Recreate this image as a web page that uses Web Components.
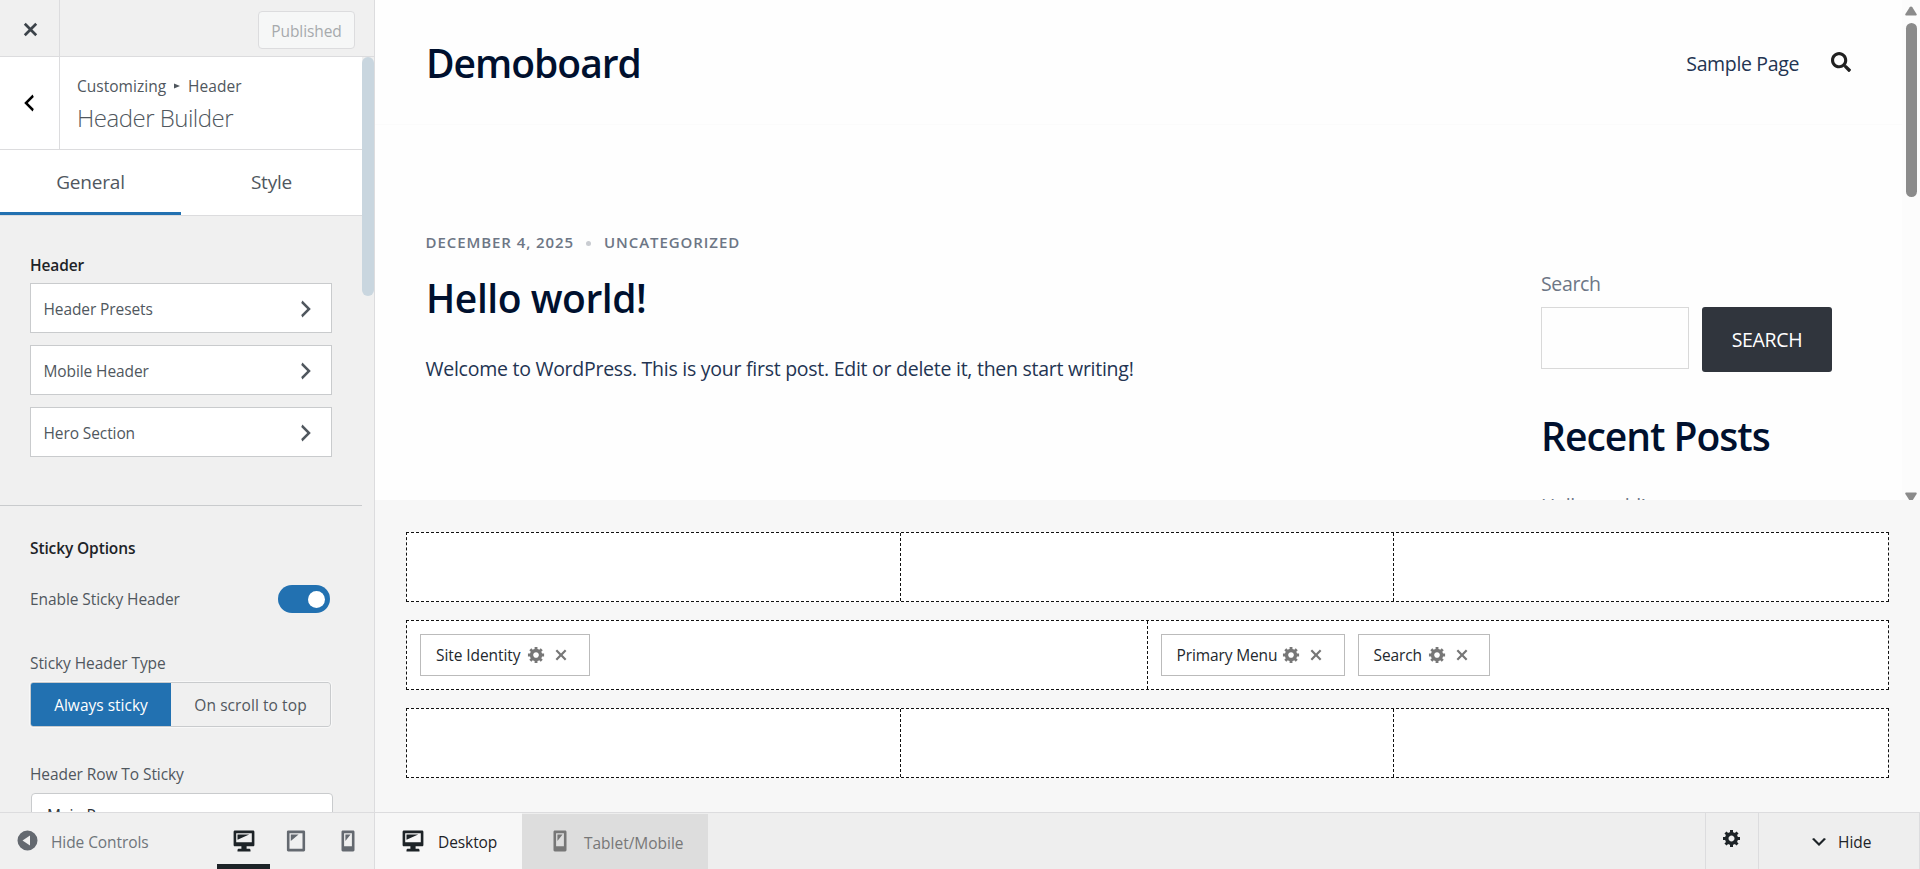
<!DOCTYPE html>
<html lang="en">
<head>
<meta charset="utf-8">
<title>Customize: Demoboard</title>
<style>
    html, body {
        margin: 0;
        height: 100%;
        overflow: hidden;
    }

    body {
        font-family: "Open Sans", "Noto Sans", sans-serif;
        font-size: 15.5px;
        letter-spacing: -0.08px;
        color: #50575e;
    }
</style>
</head>
<body>
<customizer-app></customizer-app>

<script>
    const ICONS = {
        no: ['0 0 20 20', 'M14.95 6.46L11.41 10l3.54 3.54-1.41 1.41L10 11.42l-3.53 3.53-1.42-1.42L8.58 10 5.05 6.47l1.42-1.42L10 8.58l3.54-3.53z'],
        left: ['0 0 20 20', 'M14 5l-5 5 5 5-1 2-7-7 7-7z'],
        right: ['0 0 20 20', 'M6 15l5-5-5-5 1-2 7 7-7 7z'],
        down: ['0 0 20 20', 'M5 6l5 5 5-5 2 1-7 7-7-7z'],
        gear: ['0 0 20 20', 'M18 12h-2.18c-.17.7-.44 1.35-.81 1.93l1.54 1.54-2.1 2.1-1.54-1.54c-.58.36-1.23.63-1.91.79V19H8v-2.18c-.68-.16-1.33-.43-1.91-.79l-1.54 1.54-2.12-2.12 1.54-1.54c-.36-.58-.63-1.23-.79-1.91H1V9.03h2.17c.16-.7.44-1.35.8-1.94L2.43 5.55l2.1-2.1 1.54 1.54c.58-.37 1.24-.64 1.93-.81V2h3v2.18c.68.16 1.33.43 1.91.79l1.54-1.54 2.12 2.12-1.54 1.54c.36.59.64 1.24.8 1.94H18V12zm-8.5 1.5c1.66 0 3-1.34 3-3s-1.34-3-3-3-3 1.34-3 3 1.34 3 3 3z'],
        desktop: ['0 0 20 20', 'M3 2h14c.55 0 1 .45 1 1v10c0 .55-.45 1-1 1h-5v2h2c.55 0 1 .45 1 1v1H5v-1c0-.55.45-1 1-1h2v-2H3c-.55 0-1-.45-1-1V3c0-.55.45-1 1-1zm13 9V4H4v7h12zM5 5h9L5 9V5z'],
        tablet: ['0 0 20 20', 'M4 2h12c.55 0 1 .45 1 1v14c0 .55-.45 1-1 1H4c-.55 0-1-.45-1-1V3c0-.55.45-1 1-1zm11 14V4H5v12h10zM6 5h6l-6 5V5z'],
        phone: ['0 0 20 20', 'M6 2h8c.55 0 1 .45 1 1v14c0 .55-.45 1-1 1H6c-.55 0-1-.45-1-1V3c0-.55.45-1 1-1zm7 12V4H7v10h6zM8 5h4l-4 5V5z'],
        collapse: ['0 0 20 20', 'M10 2a8 8 0 1 0 0 16 8 8 0 1 0 0-16zM12 6v8l-6-4z'],
        crumb: ['0 0 6 6', 'M0 0.5L6 3L0 5.5z'],
        search: ['0 0 512 512', 'M505 442.7L405.3 343c-4.5-4.5-10.6-7-17-7H372c27.6-35.3 44-79.7 44-128C416 93.1 322.9 0 208 0S0 93.1 0 208s93.1 208 208 208c48.3 0 92.7-16.4 128-44v16.3c0 6.4 2.5 12.5 7 17l99.7 99.7c9.4 9.4 24.6 9.4 33.9 0l28.3-28.3c9.4-9.4 9.4-24.6.1-34zM208 336c-70.7 0-128-57.2-128-128 0-70.7 57.2-128 128-128 70.7 0 128 57.2 128 128 0 70.7-57.2 128-128 128z'],
        up: ['0 0 12 10', 'M6 0.5Q6.8 0.5 7.3 1.2L11.6 8Q12.2 9.6 10.8 9.6H1.2Q-0.2 9.6 0.4 8L4.7 1.2Q5.2 0.5 6 0.5z'],
        tri: ['0 0 12 10', 'M6 9.5Q6.8 9.5 7.3 8.8L11.6 2Q12.2 0.4 10.8 0.4H1.2Q-0.2 0.4 0.4 2L4.7 8.8Q5.2 9.5 6 9.5z']
    };

    // Shared base: opens the shadow root and fills it from markup()
    class BaseElement extends HTMLElement {
        constructor() {
            super();
            this.attachShadow({ mode: 'open' });
        }

        connectedCallback() {
            const template = document.createElement('template');
            template.innerHTML = this.markup();
            this.shadowRoot.replaceChildren(template.content.cloneNode(true));
        }
    }

    class UiIcon extends BaseElement {
        markup() {
            const [box, path] = ICONS[this.getAttribute('name')];
            return `
                <style>
                    :host { display: block; flex: none; width: 26px; height: 26px; }
                    svg { display: block; width: 100%; height: 100%; fill: currentColor; }
                </style>
                <svg viewBox="${box}"><path fill-rule="evenodd" d="${path}"/></svg>
            `;
        }
    }

    class PanelLink extends BaseElement {
        markup() {
            return `
                <style>
                    :host {
                        display: flex;
                        align-items: center;
                        justify-content: space-between;
                        box-sizing: border-box;
                        height: 50px;
                        margin-bottom: 12px;
                        padding: 2px 13px 0 12.5px;
                        background: #fff;
                        border: 1px solid #c9cbcd;
                        letter-spacing: -0.1px;
                    }
                    ui-icon { width: 24px; height: 24px; margin-top: -1px; }
                </style>
                <slot></slot>
                <ui-icon name="right"></ui-icon>
            `;
        }
    }

    class SidebarTop extends BaseElement {
        markup() {
            return `
                <style>
                    :host {
                        display: flex;
                        box-sizing: border-box;
                        height: 57px;
                        border-bottom: 1px solid #dcdcde;
                    }
                    .close {
                        display: flex;
                        justify-content: center;
                        align-items: center;
                        width: 59px;
                        border-right: 1px solid #dcdcde;
                        color: #3c434a;
                    }
                    .close ui-icon { width: 27px; height: 27px; margin: 2px 0 0 2px; }
                    .publish {
                        box-sizing: border-box;
                        width: 97px;
                        height: 38px;
                        margin: 11px 19px 0 auto;
                        border: 1px solid #dcdcde;
                        border-radius: 4px;
                        background: #f6f7f7;
                        color: #a7aaad;
                        font: inherit;
                        letter-spacing: -0.1px;
                        line-height: 36px;
                        padding: 1px 0 0;
                    }
                </style>
                <div class="close"><ui-icon name="no"></ui-icon></div>
                <button class="publish">Published</button>
            `;
        }
    }

    class PanelHeading extends BaseElement {
        markup() {
            return `
                <style>
                    :host {
                        display: flex;
                        box-sizing: border-box;
                        height: 93px;
                        background: #fff;
                        border-bottom: 1px solid #dcdcde;
                    }
                    .back {
                        display: flex;
                        justify-content: center;
                        align-items: center;
                        width: 59px;
                        border-right: 1px solid #dcdcde;
                        color: #000;
                    }
                    .back ui-icon { width: 24px; height: 24px; margin: 0 2px 1px 0; }
                    .text { padding: 17px 0 0 17px; }
                    .crumbs { display: flex; align-items: center; line-height: 24px; letter-spacing: 0.02px; }
                    .crumbs ui-icon { width: 6px; height: 6px; margin: 0 8px; }
                    h2 {
                        margin: 3px 0 0;
                        font-size: 24px;
                        font-weight: 300;
                        line-height: 34px;
                        letter-spacing: -0.5px;
                    }
                </style>
                <div class="back"><ui-icon name="left"></ui-icon></div>
                <div class="text">
                    <div class="crumbs"><span>Customizing</span><ui-icon name="crumb"></ui-icon><span>Header</span></div>
                    <h2>Header Builder</h2>
                </div>
            `;
        }
    }

    class PanelTabs extends BaseElement {
        markup() {
            return `
                <style>
                    :host {
                        display: grid;
                        grid-template-columns: 1fr 1fr;
                        box-sizing: border-box;
                        height: 66px;
                        background: #fff;
                        border-bottom: 1px solid #dcdcde;
                        font-size: 19px;
                        letter-spacing: -0.2px;
                        line-height: 64px;
                        text-align: center;
                    }
                    .active { box-shadow: inset 0 -3px #2271b1; }
                </style>
                <div class="active">General</div>
                <div>Style</div>
            `;
        }
    }

    class CustomizerSidebar extends BaseElement {
        markup() {
            return `
                <style>
                    :host {
                        display: flex;
                        flex-direction: column;
                        min-height: 0;
                        background: #f0f0f0;
                        border-right: 1px solid #dcdcde;
                    }
                    .scroll { display: flex; flex: 1; min-height: 0; overflow: hidden; }
                    .panel { width: 362px; }
                    .thumb { width: 12px; height: 239px; border-radius: 6px; background: #c9d6df; }
                    section { padding: 0 30px; }
                    section + section { border-top: 1px solid #c9cbcd; }
                    h3 {
                        margin: 0;
                        color: #1d2327;
                        font-size: 15.5px;
                        font-weight: 600;
                        line-height: 24px;
                        letter-spacing: -0.12px;
                    }
                    .first { height: 289px; box-sizing: border-box; padding-top: 37px; }
                    .first h3 { margin-bottom: 6px; }
                    .second { padding-top: 30px; line-height: 24px; }
                    .toggle-row {
                        display: flex;
                        align-items: center;
                        justify-content: space-between;
                        margin: 25px 2px 0 0;
                        height: 28px;
                    }
                    .toggle {
                        display: flex;
                        align-items: center;
                        justify-content: flex-end;
                        box-sizing: border-box;
                        width: 52px;
                        height: 28px;
                        padding: 0 5px;
                        border-radius: 14px;
                        background: #2271b1;
                    }
                    .toggle i { width: 17px; height: 17px; border-radius: 50%; background: #fff; }
                    .label { margin-top: 38px; }
                    .segment {
                        display: grid;
                        grid-template-columns: 140px 1fr;
                        box-sizing: border-box;
                        width: 301px;
                        height: 45px;
                        margin-top: 7px;
                        border: 1px solid #c9cbcd;
                        border-radius: 3px;
                        outline: 1px solid #f8f8f8;
                        line-height: 45px;
                        text-align: center;
                        overflow: hidden;
                    }
                    .segment b { background: #2271b1; color: #fff; font-weight: 400; letter-spacing: 0; }
                    .segment span { letter-spacing: 0.08px; }
                    .row-label { margin-top: 35px; }
                    .select {
                        box-sizing: border-box;
                        width: 302px;
                        height: 50px;
                        margin: 7px 0 0 1px;
                        padding-left: 15px;
                        border: 1px solid #c9cbcd;
                        border-radius: 4px;
                        background: #fff;
                        color: #2c3338;
                        line-height: 43px;
                    }
                </style>
                <sidebar-top></sidebar-top>
                <div class="scroll">
                    <div class="panel">
                        <panel-heading></panel-heading>
                        <panel-tabs></panel-tabs>
                        <section class="first">
                            <h3>Header</h3>
                            <panel-link>Header Presets</panel-link>
                            <panel-link>Mobile Header</panel-link>
                            <panel-link>Hero Section</panel-link>
                        </section>
                        <section class="second">
                            <h3>Sticky Options</h3>
                            <div class="toggle-row"><span>Enable Sticky Header</span><span class="toggle"><i></i></span></div>
                            <div class="label">Sticky Header Type</div>
                            <div class="segment"><b>Always sticky</b><span>On scroll to top</span></div>
                            <div class="row-label">Header Row To Sticky</div>
                            <div class="select">Main Row</div>
                        </section>
                    </div>
                    <div class="thumb"></div>
                </div>
            `;
        }
    }

    class SidebarFooter extends BaseElement {
        markup() {
            return `
                <style>
                    :host {
                        display: flex;
                        justify-content: space-between;
                        background: #f0f0f0;
                        border-right: 1px solid #dcdcde;
                        border-top: 1px solid #dcdcde;
                        color: #646970;
                    }
                    .hide { display: flex; align-items: center; padding: 0 0 0 15px; }
                    .hide span { margin: 2px 0 0 11px; color: #6f757b; letter-spacing: -0.08px; }
                    .hide ui-icon { width: 25px; height: 25px; margin-bottom: 1px; }
                    .devices { display: flex; margin-right: 0; }
                    .device {
                        display: flex;
                        justify-content: center;
                        align-items: center;
                        box-sizing: border-box;
                        width: 52px;
                        padding: 0 1px 1px 0;
                    }
                    .active { color: #1d2327; width: 53px; padding-right: 0; box-shadow: inset 0 -5px #1d2327; }
                </style>
                <div class="hide"><ui-icon name="collapse"></ui-icon><span>Hide Controls</span></div>
                <div class="devices">
                    <div class="device active"><ui-icon name="desktop"></ui-icon></div>
                    <div class="device"><ui-icon name="tablet"></ui-icon></div>
                    <div class="device"><ui-icon name="phone"></ui-icon></div>
                </div>
            `;
        }
    }

    class SitePreview extends BaseElement {
        markup() {
            return `
                <style>
                    :host {
                        display: grid;
                        grid-template-columns: 1fr 18px;
                        height: 500px;
                        overflow: hidden;
                        background: #fefefe;
                        color: #233452;
                        font-size: 19.5px;
                        letter-spacing: -0.35px;
                    }
                    .page { min-width: 0; height: 500px; overflow: hidden; }
                    header {
                        display: flex;
                        align-items: center;
                        box-sizing: border-box;
                        height: 125px;
                        padding: 2px 51px 0;
                        border-bottom: 1px solid #fbfbfb;
                    }
                    h1, h2 {
                        margin: 0;
                        color: #00102e;
                        font-size: 39px;
                        font-weight: 600;
                        line-height: 52px;
                        letter-spacing: -1px;
                    }
                    nav { margin-left: auto; }
                    header ui-icon { width: 20px; height: 20px; margin: -3px 0 0 32px; color: #212121; }
                    .columns { display: grid; grid-template-columns: 1fr 361px; }
                    article { padding: 105px 0 0 51px; }
                    .meta {
                        display: flex;
                        align-items: center;
                        margin-left: -0.5px;
                        font-size: 15px;
                        font-weight: 600;
                        line-height: 24px;
                        letter-spacing: 0.93px;
                        color: #6d7685;
                    }
                    .meta i { width: 5px; height: 5px; margin: 3px 13px 0 12px; border-radius: 50%; background: #c9ccd1; }
                    article h2 { margin-top: 18px; letter-spacing: -0.45px; }
                    article p { margin: 30px 0 0 -0.5px; line-height: 30px; letter-spacing: -0.26px; }
                    aside { padding-top: 144px; color: #6d7685; }
                    aside .label { line-height: 30px; }
                    .form { display: flex; gap: 13px; margin-top: 8px; }
                    .input { box-sizing: border-box; width: 148px; height: 62px; border: 1px solid #d9d9d9; }
                    .button {
                        width: 130px;
                        height: 65px;
                        border-radius: 3px;
                        background: #30353d;
                        color: #fff;
                        line-height: 65px;
                        text-align: center;
                    }
                    aside h2 { margin: 38px 0 0 0; }
                    aside a { display: block; margin-top: 29px; line-height: 30px; }
                    .bar { display: flex; flex-direction: column; align-items: center; height: 500px; color: #8b8b8b; background: #fcfcfc; }
                    .bar ui-icon { width: 12px; height: 10px; }
                    .bar .up { margin: 6px 0 7px; }
                    .bar .thumb { width: 11px; height: 174px; margin-bottom: 295px; border-radius: 6px; background: #8b8b8b; flex: none; }
                </style>
                <div class="page">
                    <header>
                        <h1>Demoboard</h1>
                        <nav>Sample Page</nav>
                        <ui-icon name="search"></ui-icon>
                    </header>
                    <div class="columns">
                        <article>
                            <div class="meta"><span>DECEMBER 4, 2025</span><i></i><span>UNCATEGORIZED</span></div>
                            <h2>Hello world!</h2>
                            <p>Welcome to WordPress. This is your first post. Edit or delete it, then start writing!</p>
                        </article>
                        <aside>
                            <div class="label">Search</div>
                            <div class="form"><div class="input"></div><div class="button">SEARCH</div></div>
                            <h2>Recent Posts</h2>
                            <a>Hello world!</a>
                        </aside>
                    </div>
                </div>
                <div class="bar">
                    <ui-icon class="up" name="up"></ui-icon>
                    <div class="thumb"></div>
                    <ui-icon name="tri"></ui-icon>
                </div>
            `;
        }
    }

    class BuilderItem extends BaseElement {
        markup() {
            return `
                <style>
                    :host {
                        display: flex;
                        align-items: center;
                        box-sizing: border-box;
                        height: 42px;
                        padding: 0 17px 0 15px;
                        border: 1px solid #bbb;
                        background: #fff;
                        color: #23282d;
                        white-space: nowrap;
                    }
                    ui-icon { color: #777; }
                    .gear { width: 19px; height: 19px; margin: -1px 0 0 var(--gear-gap, 7px); }
                    .no { width: 22px; height: 22px; margin-left: 4px; }
                </style>
                <slot></slot>
                <ui-icon class="gear" name="gear"></ui-icon>
                <ui-icon class="no" name="no"></ui-icon>
            `;
        }
    }

    class BuilderRow extends BaseElement {
        markup() {
            return `
                <style>
                    :host {
                        display: grid;
                        grid-auto-flow: column;
                        grid-auto-columns: 1fr;
                        box-sizing: border-box;
                        height: 70px;
                        border: 1px dashed #111;
                        background: #fff;
                    }
                    ::slotted(div) {
                        display: flex;
                        align-items: center;
                        gap: 13px;
                        padding-left: 13px;
                    }
                    ::slotted(div:not(:first-child)) { margin-left: -1px; border-left: 1px dashed #111; }
                </style>
                <slot></slot>
            `;
        }
    }

    class HeaderBuilder extends BaseElement {
        markup() {
            return `
                <style>
                    :host {
                        display: flex;
                        flex-direction: column;
                        gap: 18px;
                        padding: 32px 31px 0;
                        background: #f7f7f7;
                    }
                    .identity { width: 170px; }
                    .menu { width: 184px; --gear-gap: 5px; letter-spacing: -0.12px; }
                    .search { width: 132px; --gear-gap: 6px; letter-spacing: -0.12px; }
                </style>
                <builder-row><div></div><div></div><div></div></builder-row>
                <builder-row>
                    <div><builder-item class="identity">Site Identity</builder-item></div>
                    <div><builder-item class="menu">Primary Menu</builder-item><builder-item class="search">Search</builder-item></div>
                </builder-row>
                <builder-row><div></div><div></div><div></div></builder-row>
            `;
        }
    }

    class BuilderFooter extends BaseElement {
        markup() {
            return `
                <style>
                    :host {
                        display: flex;
                        background: #eee;
                        border-top: 1px solid #dcdcde;
                        border-right: 1px solid #dcdcde;
                        color: #1d2327;
                    }
                    div { display: flex; align-items: center; box-sizing: border-box; }
                    span { padding-top: 3px; }
                    .desktop { width: 147px; padding: 0 0 1px 25px; background: #f7f7f7; }
                    .desktop span { margin-left: 12px; }
                    .mobile { width: 186px; padding: 0 0 1px 25px; margin-top: 1px; background: #ddd; color: #777; }
                    .mobile span { margin-left: 11px; letter-spacing: -0.02px; }
                    .settings { width: 53px; justify-content: center; margin-left: auto; padding-bottom: 6px; border-left: 1px solid #dcdcde; }
                    .settings ui-icon { width: 20px; height: 20px; }
                    .hide { width: 161px; padding-left: 50px; border-left: 1px solid #dcdcde; }
                    .hide ui-icon { width: 20px; height: 20px; margin-top: 1px; }
                    .hide span { margin-left: 9px; padding-top: 1px; letter-spacing: 0; }
                </style>
                <div class="desktop"><ui-icon name="desktop"></ui-icon><span>Desktop</span></div>
                <div class="mobile"><ui-icon name="phone"></ui-icon><span>Tablet/Mobile</span></div>
                <div class="settings"><ui-icon name="gear"></ui-icon></div>
                <div class="hide"><ui-icon name="down"></ui-icon><span>Hide</span></div>
            `;
        }
    }

    class CustomizerApp extends BaseElement {
        markup() {
            return `
                <style>
                    :host {
                        display: grid;
                        grid-template-columns: 375px 1fr;
                        grid-template-rows: 812px 57px;
                        height: 869px;
                        overflow: hidden;
                    }
                    main { display: grid; grid-template-rows: 500px 312px; min-width: 0; }
                </style>
                <customizer-sidebar></customizer-sidebar>
                <main>
                    <site-preview></site-preview>
                    <header-builder></header-builder>
                </main>
                <sidebar-footer></sidebar-footer>
                <builder-footer></builder-footer>
            `;
        }
    }

    customElements.define('ui-icon', UiIcon);
    customElements.define('panel-link', PanelLink);
    customElements.define('sidebar-top', SidebarTop);
    customElements.define('panel-heading', PanelHeading);
    customElements.define('panel-tabs', PanelTabs);
    customElements.define('customizer-sidebar', CustomizerSidebar);
    customElements.define('sidebar-footer', SidebarFooter);
    customElements.define('site-preview', SitePreview);
    customElements.define('builder-item', BuilderItem);
    customElements.define('builder-row', BuilderRow);
    customElements.define('header-builder', HeaderBuilder);
    customElements.define('builder-footer', BuilderFooter);
    customElements.define('customizer-app', CustomizerApp);
</script>
</body>
</html>
